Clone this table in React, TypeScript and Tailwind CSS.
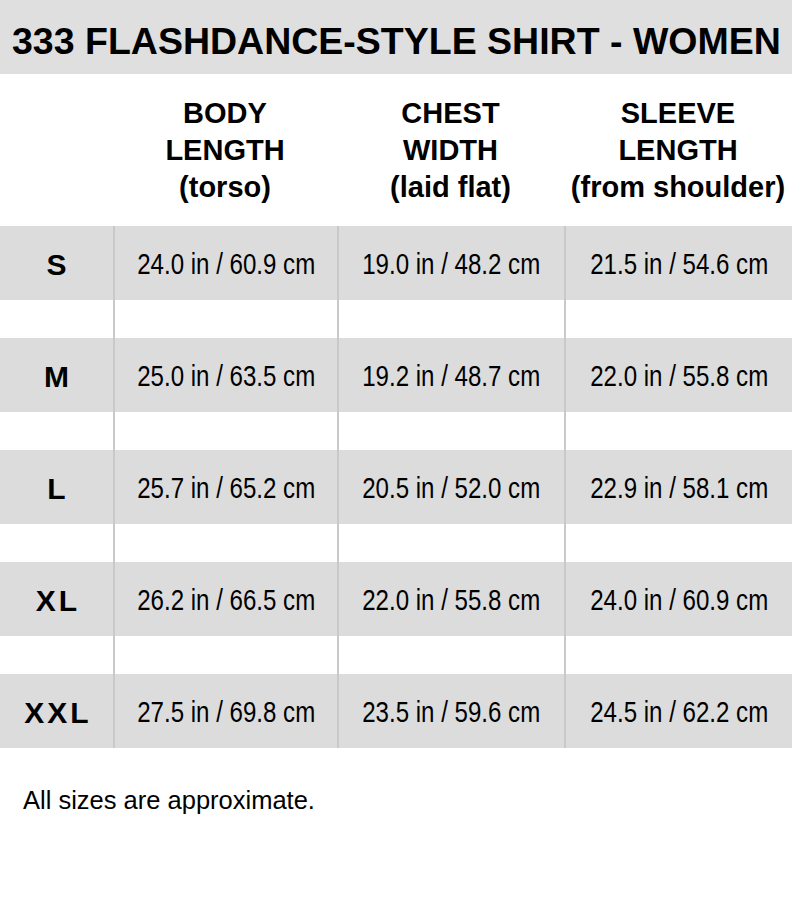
import React from "react";

const rows = [
  { size: "S", body: "24.0 in / 60.9 cm", chest: "19.0 in / 48.2 cm", sleeve: "21.5 in / 54.6 cm" },
  { size: "M", body: "25.0 in / 63.5 cm", chest: "19.2 in / 48.7 cm", sleeve: "22.0 in / 55.8 cm" },
  { size: "L", body: "25.7 in / 65.2 cm", chest: "20.5 in / 52.0 cm", sleeve: "22.9 in / 58.1 cm" },
  { size: "XL", body: "26.2 in / 66.5 cm", chest: "22.0 in / 55.8 cm", sleeve: "24.0 in / 60.9 cm" },
  { size: "XXL", body: "27.5 in / 69.8 cm", chest: "23.5 in / 59.6 cm", sleeve: "24.5 in / 62.2 cm" },
];

const cols = "grid grid-cols-[113px_224px_227px_228px]";

function Cell({ text }: { text: string }) {
  // no narrow font installed, so squeeze regular sans to match the condensed look
  return (
    <div className="flex items-center justify-center border-l-2 border-[#c9c9c9] pt-[3px]">
      <span className="inline-block whitespace-nowrap text-[29px] scale-x-[0.83]">{text}</span>
    </div>
  );
}

export default function App() {
  return (
    <div className="w-[792px] h-[900px] bg-white text-black font-['Liberation_Sans',Arial,sans-serif]">
      {/* Title */}
      <div className="h-[74px] bg-[#dfdfdf] flex items-center pl-[12px] pt-[9px]">
        <h1 className="text-[37.5px] font-bold leading-none whitespace-nowrap">
          333 FLASHDANCE-STYLE SHIRT - WOMEN
        </h1>
      </div>

      {/* Column headers */}
      <div className={`${cols} h-[152px] items-center text-center text-[29px] font-bold leading-[37px]`}>
        <div />
        <div>BODY<br />LENGTH<br />(torso)</div>
        <div>CHEST<br />WIDTH<br />(laid flat)</div>
        <div className="whitespace-nowrap">SLEEVE<br />LENGTH<br />(from shoulder)</div>
      </div>

      {/* Rows */}
      {rows.map((r, i) => (
        <div key={r.size}>
          {i > 0 && (
            <div className={`${cols} h-[38px]`}>
              <div />
              <div className="border-l-2 border-[#c9c9c9]" />
              <div className="border-l-2 border-[#c9c9c9]" />
              <div className="border-l-2 border-[#c9c9c9]" />
            </div>
          )}
          <div className={`${cols} h-[74px] bg-[#dcdcdc] items-stretch`}>
            <div className="flex items-center justify-center text-[30px] font-bold tracking-[3px] pl-[3px] pt-[2px]">
              {r.size}
            </div>
            <Cell text={r.body} />
            <Cell text={r.chest} />
            <Cell text={r.sleeve} />
          </div>
        </div>
      ))}

      {/* Footer note */}
      <p className="mt-[40px] pl-[23px] text-[25.5px] leading-none">All sizes are approximate.</p>
    </div>
  );
}
